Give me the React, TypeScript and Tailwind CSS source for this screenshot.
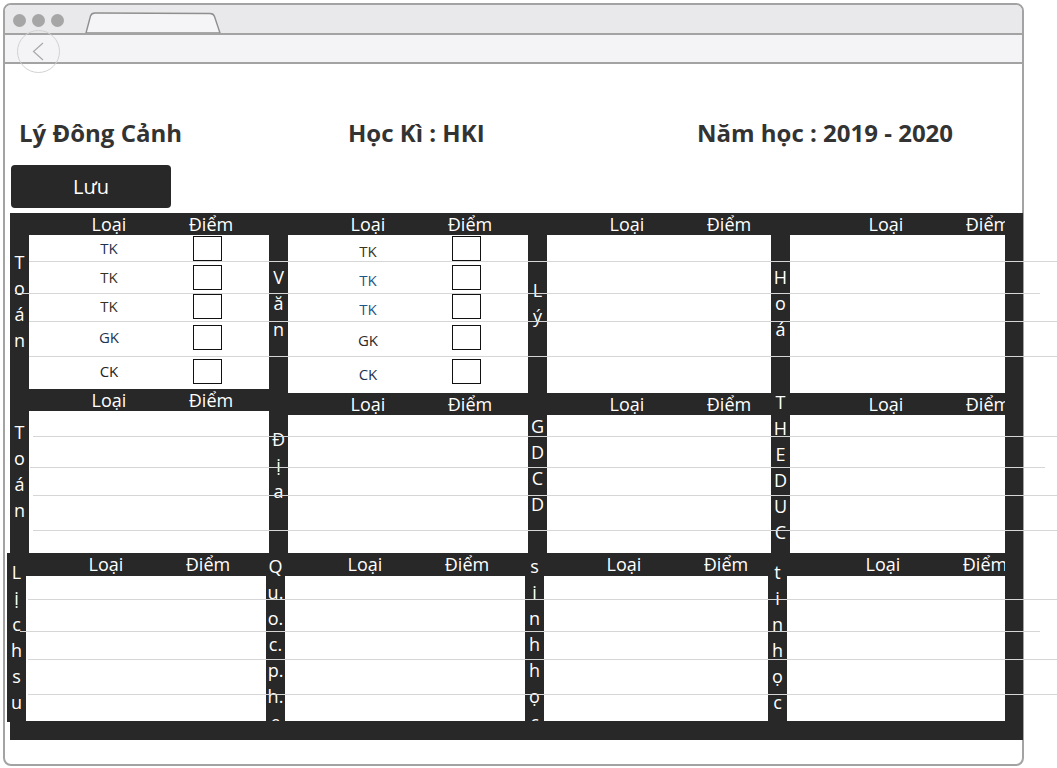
import React from "react";

type ScoreRow = { type: string; h: string; tone: string };

const toanRows: ScoreRow[] = [
  { type: "TK", h: "h-[29px]", tone: "text-[#1f3350]" },
  { type: "TK", h: "h-[29px]", tone: "text-[#3a3320]" },
  { type: "TK", h: "h-[31px]", tone: "text-[#3a3320]" },
  { type: "GK", h: "h-[34px]", tone: "text-[#1f3350]" },
  { type: "CK", h: "h-[31px]", tone: "text-[#222]" },
];

const vanRows: ScoreRow[] = [
  { type: "TK", h: "h-[29px]", tone: "text-[#3a3320]" },
  { type: "TK", h: "h-[29px]", tone: "text-[#1c5788]" },
  { type: "TK", h: "h-[31px]", tone: "text-[#1c5788]" },
  { type: "GK", h: "h-[34px]", tone: "text-[#2a2a2a]" },
  { type: "CK", h: "h-[31px]", tone: "text-[#1f3350]" },
];

function ScoreTable({ rows, textPad }: { rows: ScoreRow[]; textPad: string }) {
  return (
    <div className="flex flex-col">
      {rows.map((r, i) => (
        <div key={i} className={`flex items-start pt-[1px] ${r.h}`}>
          <div className={`flex h-[25px] w-[160px] items-center justify-center text-[15px] ${textPad} ${r.tone}`}>
            {r.type}
          </div>
          <div className="ml-[4px] h-[25px] w-[29px] border border-[#111] bg-white" />
        </div>
      ))}
    </div>
  );
}

function Card({
  label,
  labelCls = "",
  cardCls = "",
  bodyW,
  headH,
  headPad = "",
  children,
}: {
  label: string[];
  labelCls?: string;
  cardCls?: string;
  bodyW: string;
  headH: string;
  headPad?: string;
  children?: React.ReactNode;
}) {
  return (
    <div className={`flex bg-[#282828] ${cardCls}`}>
      {/* vertical subject name */}
      <div className="flex w-[19px] shrink-0 flex-col overflow-hidden">
        <div className={`my-auto flex shrink-0 flex-col items-center text-[18px] leading-[26px] text-white ${labelCls}`}>
          {label.map((c, i) => (
            <span key={i}>{c}</span>
          ))}
        </div>
      </div>
      <div className={`flex shrink-0 flex-col ${bodyW}`}>
        <div className={`flex shrink-0 items-center overflow-hidden whitespace-nowrap text-[18px] text-white ${headH} ${headPad}`}>
          <span className="flex w-[160px] shrink-0 justify-center">Loại</span>
          <span className="flex w-[44px] shrink-0 justify-center">Điểm</span>
        </div>
        <div className="flex-1 bg-white">{children}</div>
      </div>
    </div>
  );
}

export default function App() {
  return (
    <div className="relative h-[768px] w-[1057px] overflow-hidden bg-white font-['Open_Sans',sans-serif]">
      {/* browser frame */}
      <div className="relative ml-[3px] mt-[3px] h-[763px] w-[1021px] rounded-[8px] border-2 border-[#a3a3a3]">
        <div className="flex h-[28px] items-center rounded-t-[6px] bg-[#e9e9eb]">
          <div className="ml-[8px] flex gap-[6px] pt-[3px]">
            <span className="h-[13px] w-[13px] rounded-full bg-[#a6a6a6]" />
            <span className="h-[13px] w-[13px] rounded-full bg-[#a6a6a6]" />
            <span className="h-[13px] w-[13px] rounded-full bg-[#a6a6a6]" />
          </div>
          <svg className="ml-[21px] self-end" width="136" height="21" viewBox="0 0 136 21">
            <path d="M1 21 L5.5 4 Q6.5 1 10 1 L125 1.5 Q128.5 1.5 129.5 4.5 L135 21 Z" fill="#f5f5f7" stroke="#8f8f8f" strokeWidth="1.4" />
          </svg>
        </div>
        <div className="h-[2px] bg-[#a3a3a3]" />
        <div className="h-[27px] bg-[#f4f4f6]" />
        <div className="h-[2px] bg-[#a3a3a3]" />

        {/* back button */}
        <div className="absolute left-[12px] top-[25px] flex h-[43px] w-[43px] items-center justify-center rounded-full border border-[#d2d2d2]">
          <svg width="43" height="43" viewBox="0 0 43 43" className="absolute left-[-1px] top-[-1px]">
            <path d="M26 13 L16.5 21.5 L26 30" fill="none" stroke="#a9a9a9" strokeWidth="1.2" />
          </svg>
        </div>

        {/* header */}
        <div className="mt-[54px] flex pl-[14px] text-[24px] font-bold leading-[30px] text-[#333]">
          <div className="w-[329px]">Lý Đông Cảnh</div>
          <div className="w-[349px]">Học Kì : HKI</div>
          <div>Năm học : 2019 - 2020</div>
        </div>

        <button className="ml-[6px] mt-[17px] flex h-[43px] w-[160px] items-center justify-center rounded-[4px] bg-[#282828] text-[20px] text-white">
          Lưu
        </button>

        {/* grade board */}
        <div className="ml-[5px] mt-[5px] w-[1013px] bg-[#282828]">
          {/* row 1 */}
          <div className="relative flex h-[180px]">
            <Card label={["T", "o", "á", "n"]} cardCls="h-[176px] self-start" bodyW="w-[240px]" headH="h-[22px]">
              <ScoreTable rows={toanRows} textPad="" />
            </Card>
            <Card label={["V", "ă", "n"]} bodyW="w-[240px]" headH="h-[22px]">
              <ScoreTable rows={vanRows} textPad="pt-[6px]" />
            </Card>
            <Card label={["L", "ý"]} bodyW="w-[224px]" headH="h-[22px]" />
            <Card label={["H", "o", "á"]} bodyW="w-[215px]" headH="h-[22px]" headPad="pl-[16px]" />
            <div className="pointer-events-none absolute left-[19px] top-[48px] h-px w-[1028px] bg-[#d6d6d6]" />
            <div className="pointer-events-none absolute left-[5px] top-[80px] h-px w-[1025px] bg-[#d6d6d6]" />
            <div className="pointer-events-none absolute left-[19px] top-[108px] h-px w-[1028px] bg-[#d6d6d6]" />
            <div className="pointer-events-none absolute left-[19px] top-[143px] h-px w-[1028px] bg-[#d6d6d6]" />
          </div>

          {/* row 2 */}
          <div className="relative flex h-[160px]">
            <Card label={["T", "o", "á", "n"]} cardCls="-mt-[4px] h-[164px] self-start" bodyW="w-[240px]" headH="h-[22px]" />
            <Card label={["Đ", "ị", "a"]} labelCls="-translate-y-[8px]" bodyW="w-[240px]" headH="h-[22px]" />
            <Card label={["G", "D", "C", "D"]} labelCls="-translate-y-[8px]" bodyW="w-[224px]" headH="h-[22px]" />
            <Card label={["T", "H", "E", "D", "U", "C"]} labelCls="-translate-y-[6px]" bodyW="w-[215px]" headH="h-[22px]" headPad="pl-[16px]" />
            <div className="pointer-events-none absolute left-[23px] top-[43px] h-px w-[1024px] bg-[#d6d6d6]" />
            <div className="pointer-events-none absolute left-[20px] top-[74px] h-px w-[1015px] bg-[#d6d6d6]" />
            <div className="pointer-events-none absolute left-[23px] top-[102px] h-px w-[1024px] bg-[#d6d6d6]" />
            <div className="pointer-events-none absolute left-[23px] top-[137px] h-px w-[1024px] bg-[#d6d6d6]" />
          </div>

          {/* row 3 */}
          <div className="relative -ml-[3px] flex h-[169px] w-[1016px] bg-[#282828]">
            <Card label={["L", "ị", "c", "h", "s", "u"]} bodyW="w-[240px]" headH="h-[23px]" cardCls="pb-px" />
            <Card label={["Q", "u.", "o.", "c.", "p.", "h.", "e"]} bodyW="w-[240px]" headH="h-[23px]" cardCls="pb-px" />
            <Card label={["s", "i", "n", "h", "h", "ọ", "c"]} bodyW="w-[224px]" headH="h-[23px]" cardCls="pb-px" />
            <Card label={["t", "i", "n", "h", "ọ", "c"]} bodyW="w-[218px]" headH="h-[23px]" headPad="pl-[16px]" cardCls="pb-px" />
            <div className="pointer-events-none absolute left-[21px] top-[46px] h-px w-[1029px] bg-[#d6d6d6]" />
            <div className="pointer-events-none absolute left-[13px] top-[78px] h-px w-[1020px] bg-[#d6d6d6]" />
            <div className="pointer-events-none absolute left-[21px] top-[106px] h-px w-[1029px] bg-[#d6d6d6]" />
            <div className="pointer-events-none absolute left-[21px] top-[141px] h-px w-[1029px] bg-[#d6d6d6]" />
          </div>

          <div className="h-[18px]" />
        </div>
      </div>
    </div>
  );
}
